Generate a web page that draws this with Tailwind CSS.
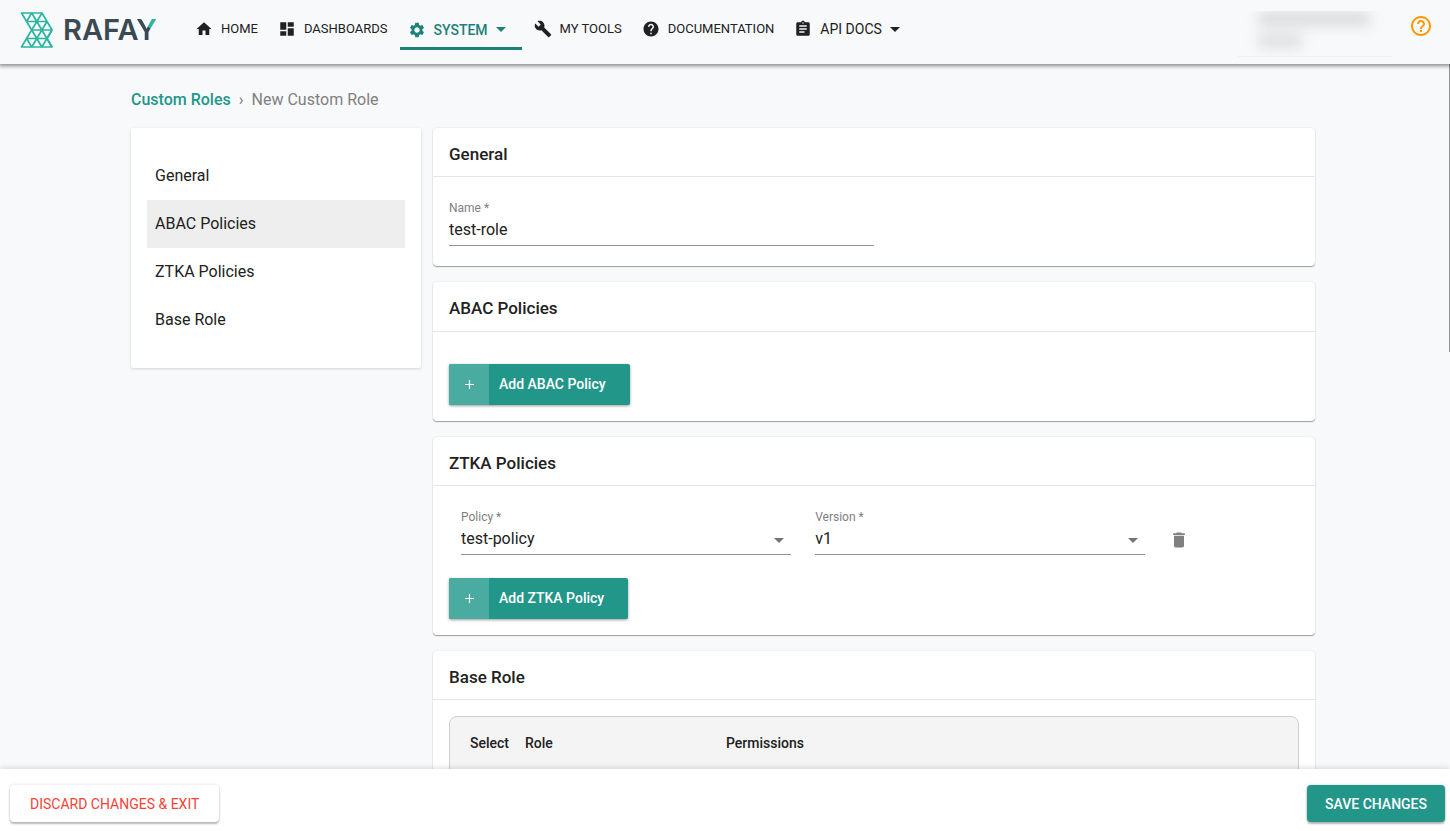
<!DOCTYPE html>
<html lang="en">
<head>
<meta charset="utf-8">
<meta name="viewport" content="width=device-width, initial-scale=1">
<title>New Custom Role</title>
<script src="https://cdn.jsdelivr.net/npm/@tailwindcss/browser@4"></script>
</head>
<body class="flex h-screen flex-col overflow-hidden bg-[#f8f9fb] font-[Roboto,sans-serif] text-base text-[#212121]">

<header class="relative z-10 flex h-16 shrink-0 items-start bg-[#f8f9fb] pl-5 pr-[17px] shadow-[0_1px_4px_1px_rgba(0,0,0,0.45)]">
  <a href="#" aria-label="Rafay" class="flex w-[151px] items-center gap-2.5 pt-3">
    <svg class="h-9 w-[33px] shrink-0" viewBox="0 0 33 36" fill="none" stroke="#2bb5a0" stroke-width="1.7" stroke-linejoin="round">
      <path d="M1.5 1H22L32 18L27 26.5L32 35H1.5L11.7 18Z"/>
      <path d="M6.6 9.5H27M11.7 18H32M6.6 26.5H27M11.7 1L32 35M11.7 18L21.9 35M6.6 26.5L11.7 35M11.7 1L6.6 9.5M22 1L11.7 18M27 9.5L11.7 35M32 18L21.9 35"/>
    </svg>
    <span class="font-[Inter,sans-serif] text-[29px] leading-9 font-semibold text-[#3b4a51]">RAFA<span class="bg-[linear-gradient(45deg,#3b4a51_58%,#2bb5a0_58%)] bg-clip-text text-transparent">Y</span></span>
  </a>
  <nav class="ml-4 flex items-start gap-1 text-[13px]">
    <a href="#" class="flex h-[50px] items-center gap-2 px-2 pb-1 pt-3">
      <svg class="size-[18px]" viewBox="0 0 24 24" fill="currentColor"><path d="M10 20v-6h4v6h5v-8h3L12 3 2 12h3v8z"/></svg>HOME</a>
    <a href="#" class="flex h-[50px] items-center gap-2 px-2 pb-1 pt-3">
      <svg class="size-[18px]" viewBox="0 0 24 24" fill="currentColor"><path d="M3 13h8V3H3v10zm0 8h8v-6H3v6zm10 0h8V11h-8v10zm0-18v6h8V3h-8z"/></svg>DASHBOARDS</a>
    <a href="#" class="flex h-[50px] items-center gap-2 border-b-3 border-[#1d8079] pl-2 pr-4 pt-3 text-sm font-medium text-[#1d8079]">
      <svg class="size-[18px]" viewBox="0 0 24 24" fill="currentColor"><path d="M19.14 12.94c.04-.3.06-.61.06-.94 0-.32-.02-.64-.07-.94l2.03-1.58c.18-.14.23-.41.12-.61l-1.92-3.32c-.12-.22-.37-.29-.59-.22l-2.39.96c-.5-.38-1.03-.7-1.62-.94L14.4 2.81c-.04-.24-.24-.41-.48-.41h-3.84c-.24 0-.43.17-.47.41l-.36 2.54c-.59.24-1.13.57-1.62.94l-2.39-.96c-.22-.08-.47 0-.59.22L2.74 8.87c-.12.21-.08.47.12.61l2.03 1.58c-.05.3-.09.63-.09.94s.02.64.07.94l-2.03 1.58c-.18.14-.23.41-.12.61l1.92 3.32c.12.22.37.29.59.22l2.39-.96c.5.38 1.03.7 1.62.94l.36 2.54c.05.24.24.41.48.41h3.84c.24 0 .44-.17.47-.41l.36-2.54c.59-.24 1.13-.56 1.62-.94l2.39.96c.22.08.47 0 .59-.22l1.92-3.32c.12-.22.07-.47-.12-.61l-2.01-1.58zM12 15.6c-1.98 0-3.6-1.62-3.6-3.6s1.62-3.6 3.6-3.6 3.6 1.62 3.6 3.6-1.62 3.6-3.6 3.6z"/></svg>SYSTEM
      <svg class="h-[5px] w-2.5" viewBox="0 0 10 5" fill="currentColor"><path d="M0 0h10L5 5z"/></svg></a>
    <a href="#" class="flex h-[50px] items-center gap-2 px-2 pb-1 pt-3">
      <svg class="size-[18px]" viewBox="0 0 24 24" fill="currentColor"><path d="M22.7 19l-9.1-9.1c.9-2.3.4-5-1.5-6.9-2-2-5-2.4-7.4-1.3L9 6 6 9 1.6 4.7C.4 7.1.9 10.1 2.9 12.1c1.9 1.9 4.6 2.4 6.9 1.5l9.1 9.1c.4.4 1 .4 1.4 0l2.3-2.3c.5-.4.5-1.1.1-1.4z"/></svg>MY TOOLS</a>
    <a href="#" class="flex h-[50px] items-center gap-2 px-2 pb-1 pt-3">
      <svg class="size-[18px]" viewBox="0 0 24 24" fill="currentColor"><path d="M12 2C6.48 2 2 6.48 2 12s4.48 10 10 10 10-4.48 10-10S17.52 2 12 2zm1 17h-2v-2h2v2zm2.07-7.75l-.9.92C13.45 12.9 13 13.5 13 15h-2v-.5c0-1.1.45-2.1 1.17-2.83l1.24-1.26c.37-.36.59-.86.59-1.41 0-1.1-.9-2-2-2s-2 .9-2 2H8c0-2.21 1.79-4 4-4s4 1.79 4 4c0 .88-.36 1.68-.93 2.25z"/></svg>DOCUMENTATION</a>
    <a href="#" class="flex h-[50px] items-center gap-2 px-2 pb-1 pt-3 text-sm">
      <svg class="size-[18px]" viewBox="0 0 24 24" fill="currentColor"><path d="M19 3h-4.18C14.4 1.84 13.3 1 12 1c-1.3 0-2.4.84-2.82 2H5c-1.1 0-2 .9-2 2v14c0 1.1.9 2 2 2h14c1.1 0 2-.9 2-2V5c0-1.1-.9-2-2-2zm-7 0c.55 0 1 .45 1 1s-.45 1-1 1-1-.45-1-1 .45-1 1-1zm2 14H7v-2h7v2zm3-4H7v-2h10v2zm0-4H7V7h10v2z"/></svg>API DOCS
      <svg class="h-[5px] w-2.5" viewBox="0 0 10 5" fill="currentColor"><path d="M0 0h10L5 5z"/></svg></a>
  </nav>
  <div class="ml-auto mt-[11px] h-[46px] w-[155px] overflow-hidden border-b border-black/3 px-5 pt-0.5" aria-hidden="true">
    <div class="h-3 w-28 bg-black/14 blur-[7px]"></div>
    <div class="mt-2.5 h-3 w-11 bg-black/12 blur-[7px]"></div>
  </div>
  <button type="button" aria-label="Help" class="ml-4 mt-3.5 text-[#ff9800]">
    <svg class="size-6" viewBox="0 0 24 24" fill="currentColor"><path d="M11 18h2v-2h-2v2zm1-16C6.48 2 2 6.48 2 12s4.48 10 10 10 10-4.48 10-10S17.52 2 12 2zm0 18c-4.41 0-8-3.59-8-8s3.59-8 8-8 8 3.59 8 8-3.59 8-8 8zm0-14c-2.21 0-4 1.79-4 4h2c0-1.1.9-2 2-2s2 .9 2 2c0 2-3 1.75-3 5h2c0-2.25 3-2.5 3-5 0-2.21-1.79-4-4-4z"/></svg>
  </button>
</header>

<main class="relative min-h-0 flex-1 overflow-y-auto pr-1 [scrollbar-width:none]">
  <div class="absolute right-0 top-0 h-72 w-px bg-[#8f8f8f]"></div>
  <div class="mx-auto max-w-[1184px] pb-4">
    <nav aria-label="Breadcrumb" class="flex h-16 items-center gap-2 pt-2">
      <a href="#" class="font-medium text-[#23968a]">Custom Roles</a>
      <span class="text-[#757575]">›</span>
      <span class="text-[#808080]">New Custom Role</span>
    </nav>
    <div class="flex items-start gap-3">
      <nav aria-label="Sections" class="flex w-[290px] shrink-0 flex-col rounded-xs bg-white px-4 py-6 shadow-[0_1px_3px_rgba(0,0,0,0.16)]">
        <a href="#general" class="flex h-12 items-center px-2">General</a>
        <a href="#abac" class="flex h-12 items-center bg-[#eeeeee] px-2">ABAC Policies</a>
        <a href="#ztka" class="flex h-12 items-center px-2">ZTKA Policies</a>
        <a href="#base" class="flex h-12 items-center px-2">Base Role</a>
      </nav>
      <div class="flex min-w-0 flex-1 flex-col gap-4">
        <section id="general" class="rounded-sm bg-white shadow-[0_1px_1px_rgba(0,0,0,0.35),0_0_2px_rgba(0,0,0,0.12)]">
          <h2 class="flex h-[49px] items-center border-b border-[#e4e5e6] px-4 pt-1.5 text-[17px] font-medium">General</h2>
          <div class="px-4 pb-5 pt-[23px]">
            <div class="flex w-1/2 flex-col">
              <label for="name" class="text-xs leading-4 text-[#808080]">Name *</label>
              <input id="name" type="text" value="test-role" class="h-[30px] border-b border-[#949494] pb-0.5 outline-none">
            </div>
          </div>
        </section>

        <section id="abac" class="rounded-sm bg-white shadow-[0_1px_1px_rgba(0,0,0,0.35),0_0_2px_rgba(0,0,0,0.12)]">
          <h2 class="flex h-[50px] items-center border-b border-[#e4e5e6] px-4 pt-1 text-[17px] font-medium">ABAC Policies</h2>
          <div class="px-4 pb-4 pt-8">
            <button type="button" class="flex h-[41px] overflow-hidden rounded-xs bg-[#23968a] text-sm font-medium text-white shadow-[0_1px_3px_rgba(0,0,0,0.4)]">
              <span class="flex w-10 items-center justify-center self-stretch bg-[#4aaca1]"><svg class="size-[9px]" viewBox="0 0 9 9" stroke="currentColor" stroke-width="1.2"><path d="M4.5 0v9M0 4.5h9"/></svg></span>
              <span class="self-center pb-0.5 pl-2.5 pr-6">Add ABAC Policy</span>
            </button>
          </div>
        </section>

        <section id="ztka" class="rounded-sm bg-white shadow-[0_1px_1px_rgba(0,0,0,0.35),0_0_2px_rgba(0,0,0,0.12)]">
          <h2 class="flex h-[49px] items-center border-b border-[#e4e5e6] px-4 pt-1.5 text-[17px] font-medium">ZTKA Policies</h2>
          <div class="flex flex-col gap-[23px] px-4 pb-4 pt-[23px]">
            <div class="grid grid-cols-12">
              <div class="col-span-5 flex flex-col px-3">
                <label for="policy" class="text-xs leading-4 text-[#808080]">Policy *</label>
                <div class="relative flex">
                  <select id="policy" class="h-[30px] w-full appearance-none border-b border-[#949494] pb-0.5 outline-none"><option>test-policy</option></select>
                  <svg class="pointer-events-none absolute right-[7px] top-[13px] h-[5px] w-2.5" viewBox="0 0 10 5" fill="#757575"><path d="M0 0h10L5 5z"/></svg>
                </div>
              </div>
              <div class="col-span-5 flex flex-col px-3">
                <label for="version" class="text-xs leading-4 text-[#808080]">Version *</label>
                <div class="relative flex">
                  <select id="version" class="h-[30px] w-full appearance-none border-b border-[#949494] pb-0.5 outline-none"><option>v1</option></select>
                  <svg class="pointer-events-none absolute right-[7px] top-[13px] h-[5px] w-2.5" viewBox="0 0 10 5" fill="#757575"><path d="M0 0h10L5 5z"/></svg>
                </div>
              </div>
              <div class="col-span-2 flex items-center px-3 pt-4">
                <button type="button" aria-label="Delete policy" class="text-[#808080]">
                  <svg class="size-5" viewBox="0 0 24 24" fill="currentColor"><path d="M6 19c0 1.1.9 2 2 2h8c1.1 0 2-.9 2-2V7H6v12zM19 4h-3.5l-1-1h-5l-1 1H5v2h14V4z"/></svg>
                </button>
              </div>
            </div>
            <button type="button" class="flex h-[41px] self-start overflow-hidden rounded-xs bg-[#23968a] text-sm font-medium text-white shadow-[0_1px_3px_rgba(0,0,0,0.4)]">
              <span class="flex w-10 items-center justify-center self-stretch bg-[#4aaca1]"><svg class="size-[9px]" viewBox="0 0 9 9" stroke="currentColor" stroke-width="1.2"><path d="M4.5 0v9M0 4.5h9"/></svg></span>
              <span class="self-center pb-0.5 pl-2.5 pr-6">Add ZTKA Policy</span>
            </button>
          </div>
        </section>

        <section id="base" class="rounded-sm bg-white shadow-[0_1px_1px_rgba(0,0,0,0.35),0_0_2px_rgba(0,0,0,0.12)]">
          <h2 class="flex h-[49px] items-center border-b border-[#e4e5e6] px-4 pt-1.5 text-[17px] font-medium">Base Role</h2>
          <div class="p-4">
            <div class="overflow-hidden rounded-lg border border-[#cfcfcf] bg-[#f4f4f4]">
              <table class="w-full table-fixed text-left text-sm">
                <thead>
                  <tr class="h-16 align-top">
                    <th scope="col" class="w-[75px] pl-5 pt-4 font-medium">Select</th>
                    <th scope="col" class="w-[201px] pt-4 font-medium">Role</th>
                    <th scope="col" class="pt-4 font-medium">Permissions</th>
                  </tr>
                </thead>
              </table>
            </div>
          </div>
        </section>
      </div>
    </div>
  </div>
</main>

<footer class="relative z-10 flex shrink-0 items-start justify-between bg-white pb-[9px] pl-2.5 pr-[5px] pt-4 text-sm shadow-[0_-1px_6px_rgba(0,0,0,0.14)]">
  <button type="button" class="h-[37px] rounded-sm bg-white px-5 text-[#f44336] shadow-[0_2px_2px_rgba(0,0,0,0.25),0_0_3px_rgba(0,0,0,0.14)]">DISCARD CHANGES &amp; EXIT</button>
  <button type="button" class="h-[37px] rounded-sm bg-[#23968a] px-[18px] font-medium text-white shadow-[0_2px_2px_rgba(0,0,0,0.25),0_0_3px_rgba(0,0,0,0.2)]">SAVE CHANGES</button>
</footer>
</body>
</html>
